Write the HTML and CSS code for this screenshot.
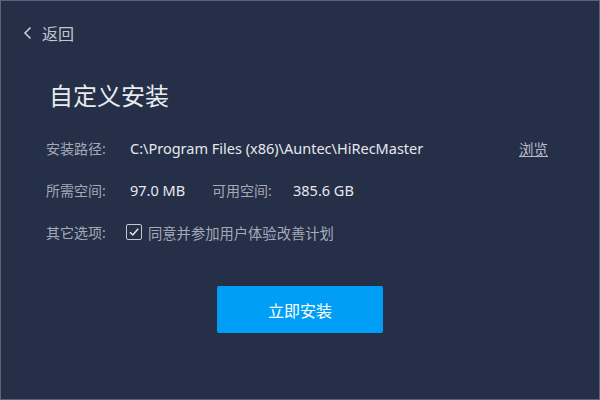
FILE: index.html
```html
<!DOCTYPE html>
<html lang="zh-CN">
<head>
    <meta charset="UTF-8">
    <title>自定义安装</title>
    <link rel="stylesheet" href="styles.css">
</head>
<body>
    <div class="window">
        <div class="topbar">
            <a class="back" href="#">
                <svg class="back-icon" width="10" height="14" viewBox="0 0 10 14">
                    <path d="M7.5 1.5 L2 7 L7.5 12.5" fill="none" stroke="#c9cdd6" stroke-width="1.6"/>
                </svg>
                <span>返回</span>
            </a>
        </div>

        <h1 class="title">自定义安装</h1>

        <div class="form">
            <div class="row">
                <span class="label">安装路径:</span>
                <span class="value path">C:\Program Files (x86)\Auntec\HiRecMaster</span>
                <a class="browse" href="#">浏览</a>
            </div>
            <div class="row">
                <span class="label">所需空间:</span>
                <span class="value size">97.0 MB</span>
                <span class="label label-free">可用空间:</span>
                <span class="value">385.6 GB</span>
            </div>
            <div class="row">
                <span class="label">其它选项:</span>
                <label class="check">
                    <span class="box">
                        <svg width="12" height="12" viewBox="0 0 12 12">
                            <path d="M2 6.2 L4.8 9 L10.2 2.8" fill="none" stroke="#e6e8ee" stroke-width="1.5"/>
                        </svg>
                    </span>
                    <span>同意并参加用户体验改善计划</span>
                </label>
            </div>
        </div>

        <div class="actions">
            <button class="install">立即安装</button>
        </div>
    </div>
</body>
</html>
```

FILE: styles.css
```css
* {
    box-sizing: border-box;
}

body {
    margin: 0;
    font-family: "Noto Sans", "Noto Sans CJK SC", sans-serif;
    background-color: #252f48;
}

.window {
    width: 600px;
    height: 400px;
    border: 1px solid #5d6478;
    background-color: #252f48;
}

.topbar {
    height: 64px;
    padding-left: 22px;
    display: flex;
    align-items: center;
}

.back {
    display: flex;
    align-items: center;
    gap: 9px;
    color: #c3c7d0;
    font-size: 16px;
    text-decoration: none;
}

.title {
    margin: 15px 0 0 48px;
    font-size: 24px;
    font-weight: normal;
    line-height: 32px;
    color: #e9ebf0;
}

.form {
    margin-top: 15px;
    padding-left: 45px;
    padding-right: 51px;
}

.row {
    height: 42px;
    display: flex;
    align-items: center;
    font-size: 14px;
}

.label {
    width: 84px;
    color: #a4aab8;
}

.value {
    color: #e6e8ee;
    font-size: 14.5px;
}

.size {
    width: 82px;
}

.label-free {
    width: 81px;
}

.browse {
    margin-left: auto;
    color: #b9bdc8;
    font-size: 14.5px;
    text-decoration: underline;
}

.check {
    display: flex;
    align-items: center;
    gap: 6px;
    color: #a4aab8;
    font-size: 14.3px;
    margin-left: -4px;
}

.box {
    width: 16px;
    height: 16px;
    border: 1px solid #c4c8d2;
    border-radius: 2px;
    display: flex;
    align-items: center;
    justify-content: center;
}

.actions {
    display: flex;
    justify-content: center;
    margin-top: 33px;
}

.install {
    width: 166px;
    height: 47px;
    border: none;
    border-radius: 2px;
    background-color: #009ff5;
    color: #fff;
    font-family: inherit;
    font-size: 16px;
    cursor: pointer;
}
```
